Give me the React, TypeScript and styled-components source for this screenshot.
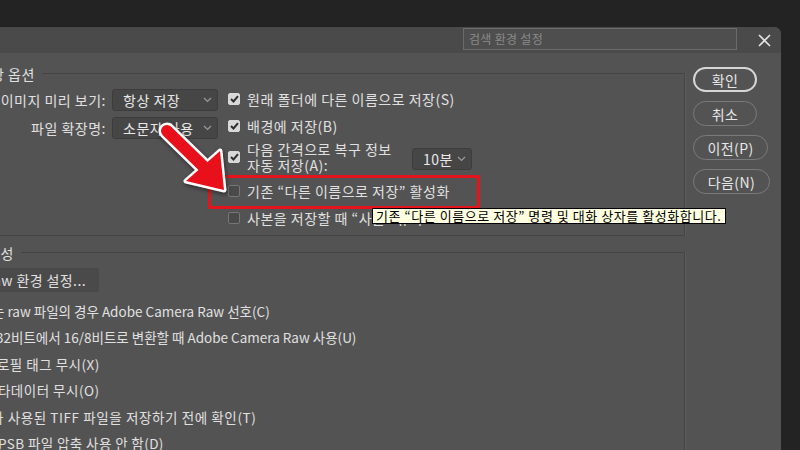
import React from "react";
import styled, { createGlobalStyle } from "styled-components";

const GlobalStyle = createGlobalStyle`
  html, body {
    margin: 0;
    padding: 0;
    background: #232323;
  }
  body {
    font-family: "Noto Sans CJK KR", "Noto Sans", sans-serif;
  }
`;

const Screen = styled.div`
  position: relative;
  width: 800px;
  height: 450px;
  overflow: hidden;
  background: #232323;
  display: flex;
  flex-direction: column;
`;

const TopGap = styled.div`
  height: 27px;
  flex: none;
`;

const Dialog = styled.div`
  margin-left: -12px;
  width: 793px;
  flex: 1;
  background: #535353;
  border-top-right-radius: 7px;
  display: flex;
  flex-direction: column;
  color: #e0e0e0;
  font-size: 14px;
`;

const TitleBar = styled.div`
  height: 26px;
  flex: none;
  background: #4a4a4a;
  border-top-right-radius: 7px;
  display: flex;
  align-items: flex-start;
  justify-content: flex-end;
`;

const SearchBox = styled.div`
  margin-top: 1px;
  width: 274px;
  height: 22px;
  box-sizing: border-box;
  border: 1px solid #6b6b6b;
  background: #4e4e4e;
  padding-left: 5px;
  font-size: 12px;
  letter-spacing: 0.3px;
  line-height: 20px;
  color: #8a8a8a;
`;

const CloseButton = styled.div`
  width: 44px;
  height: 26px;
  box-sizing: border-box;
  padding-left: 21px;
  display: flex;
  align-items: center;
`;

const Body = styled.div`
  flex: 1;
  display: flex;
  padding-top: 13px;
  min-height: 0;
`;

const MainCol = styled.div`
  width: 697px;
  flex: none;
  box-sizing: border-box;
  padding-left: 6px;
  display: flex;
  flex-direction: column;
`;

const ButtonCol = styled.div`
  padding-left: 8px;
  padding-top: 1px;
  display: flex;
  flex-direction: column;
  align-items: flex-start;
  gap: 9px;
`;

const PillButton = styled.div<{ $width: number; $primary?: boolean }>`
  width: ${({ $width }) => $width}px;
  height: 25px;
  box-sizing: border-box;
  border-radius: 13px;
  border: ${({ $primary }) =>
    $primary ? "2px solid #d6d6d6" : "1px solid #7a7a7a"};
  display: flex;
  align-items: center;
  justify-content: center;
  color: #e6e6e6;
  font-size: 14px;
  letter-spacing: 0.4px;
`;

const Group = styled.div<{ $gapTop?: number; $grow?: boolean }>`
  margin-top: ${({ $gapTop }) => $gapTop ?? 0}px;
  display: flex;
  flex-direction: column;
  flex: ${({ $grow }) => ($grow ? 1 : "none")};
`;

const GroupHead = styled.div`
  height: 16px;
  display: flex;
  align-items: center;
`;

const GroupTitle = styled.div<{ $shift: number }>`
  margin-left: ${({ $shift }) => $shift}px;
  padding-right: 7px;
  line-height: 16px;
  letter-spacing: 0.5px;
  white-space: nowrap;
`;

const GroupRule = styled.div`
  flex: 1;
  align-self: flex-end;
  height: 8px;
  border-top: 1px solid #444444;
  border-right: 1px solid #444444;
  box-shadow: 1px 0 0 #5b5b5b;
`;

const GroupBody = styled.div<{ $height?: number }>`
  box-sizing: border-box;
  height: ${({ $height }) => ($height ? `${$height}px` : "auto")};
  flex: ${({ $height }) => ($height ? "none" : 1)};
  border: 1px solid #444444;
  border-top: none;
  box-shadow: 1px 0 0 #5b5b5b;
`;

const SaveOptions = styled(GroupBody)`
  display: flex;
  align-items: flex-start;
  padding-top: 4px;
  letter-spacing: 0.5px;
`;

const FieldGrid = styled.div`
  margin-top: 3px;
  display: grid;
  grid-template-columns: 111px 106px;
  grid-auto-rows: 22px;
  column-gap: 6px;
  row-gap: 6px;
  align-items: center;
`;

const FieldLabel = styled.div`
  text-align: right;
  white-space: nowrap;
  line-height: 22px;
`;

const SelectBox = styled.div<{ $width?: number; $nudge?: number }>`
  width: ${({ $width }) => ($width ? `${$width}px` : "auto")};
  margin-top: ${({ $nudge }) => $nudge ?? 0}px;
  height: 22px;
  box-sizing: border-box;
  background: #464646;
  border: 1px solid #3d3d3d;
  border-radius: 3px;
  display: flex;
  align-items: center;
  justify-content: space-between;
  padding: 0 5px 0 10px;
  color: #e8e8e8;
  white-space: nowrap;
  flex: none;
`;

const CheckCol = styled.div`
  margin-left: 10px;
  display: flex;
  flex-direction: column;
`;

const CheckRow = styled.div<{ $h: number }>`
  height: ${({ $h }) => $h}px;
  display: flex;
  align-items: center;
  gap: 7px;
  white-space: nowrap;
`;

const Box = styled.div<{ $checked?: boolean }>`
  width: 12px;
  height: 12px;
  box-sizing: border-box;
  border-radius: 2px;
  flex: none;
  display: flex;
  align-items: center;
  justify-content: center;
  background: ${({ $checked }) => ($checked ? "#d8d8d8" : "#4a4a4a")};
  border: 1px solid ${({ $checked }) => ($checked ? "#d8d8d8" : "#767676")};
`;

const TwoLine = styled.div`
  width: 158px;
  line-height: 16px;
  white-space: normal;
`;

const RawButton = styled.div`
  margin-top: 7px;
  margin-left: -96px;
  width: 200px;
  height: 24px;
  box-sizing: border-box;
  background: #4a4a4a;
  border: 1px solid #484848;
  border-radius: 3px;
  text-align: right;
  padding-right: 12px;
  line-height: 22px;
  letter-spacing: 0.4px;
  white-space: nowrap;
  overflow: hidden;
`;

const CompatBody = styled(GroupBody)`
  display: flex;
  flex-direction: column;
  border-bottom: none;
`;

const Lines = styled.div`
  margin-top: 6px;
  display: flex;
  flex-direction: column;
  font-size: 13.5px;
`;

const ClippedLine = styled.div<{ $shift: number; $spacing: number }>`
  margin-left: ${({ $shift }) => $shift}px;
  letter-spacing: ${({ $spacing }) => $spacing}px;
  line-height: 26.4px;
  white-space: nowrap;
`;

const RedFrame = styled.div`
  position: absolute;
  left: 208px;
  top: 175px;
  width: 272px;
  height: 34px;
  box-sizing: border-box;
  border: 3px solid #e5141c;
  border-radius: 2px;
`;

const Tooltip = styled.div`
  position: absolute;
  left: 372px;
  top: 208px;
  height: 16px;
  box-sizing: border-box;
  background: #ffffe1;
  border: 1px solid #000;
  padding: 0 3px;
  color: #000;
  font-size: 13px;
  letter-spacing: 0.55px;
  line-height: 14px;
  white-space: nowrap;
`;

const ArrowLayer = styled.svg`
  position: absolute;
  left: 150px;
  top: 115px;
  filter: drop-shadow(1px 2px 2px rgba(0, 0, 0, 0.45));
`;

const Chevron = () => (
  <svg width="9" height="6" viewBox="0 0 9 6">
    <polyline
      points="1,1 4.5,4.5 8,1"
      fill="none"
      stroke="#9a9a9a"
      strokeWidth="1.2"
    />
  </svg>
);

const Check = () => (
  <svg width="9" height="8" viewBox="0 0 9 8">
    <polyline
      points="1,4 3.5,6.5 8,1.2"
      fill="none"
      stroke="#2e2e2e"
      strokeWidth="2"
    />
  </svg>
);

const Select = ({
  value,
  width,
  nudge,
}: {
  value: string;
  width?: number;
  nudge?: number;
}) => (
  <SelectBox $width={width} $nudge={nudge}>
    {value}
    <Chevron />
  </SelectBox>
);

const compatLines = [
  { shift: -3, spacing: 0, text: "는 raw 파일의 경우 Adobe Camera Raw 선호(C)" },
  {
    shift: 1,
    spacing: 0,
    text: "32비트에서 16/8비트로 변환할 때 Adobe Camera Raw 사용(U)",
  },
  { shift: -11, spacing: 0.5, text: "프로필 태그 무시(X)" },
  { shift: -10, spacing: 0.5, text: "메타데이터 무시(O)" },
  { shift: -4, spacing: 0.6, text: "가 사용된 TIFF 파일을 저장하기 전에 확인(T)" },
  { shift: 3, spacing: 0.4, text: "PSB 파일 압축 사용 안 함(D)" },
];

export default function App() {
  return (
    <Screen>
      <GlobalStyle />
      <TopGap />
      <Dialog>
        <TitleBar>
          <SearchBox>검색 환경 설정</SearchBox>
          <CloseButton>
            <svg width="13" height="13" viewBox="0 0 13 13">
              <path
                d="M1 1 L12 12 M12 1 L1 12"
                stroke="#e4e4e4"
                strokeWidth="1.6"
              />
            </svg>
          </CloseButton>
        </TitleBar>
        <Body>
          <MainCol>
            <Group>
              <GroupHead>
                <GroupTitle $shift={-3}>장 옵션</GroupTitle>
                <GroupRule />
              </GroupHead>
              <SaveOptions $height={154}>
                <FieldGrid>
                  <FieldLabel>이미지 미리 보기:</FieldLabel>
                  <Select value="항상 저장" />
                  <FieldLabel>파일 확장명:</FieldLabel>
                  <Select value="소문자 사용" />
                </FieldGrid>
                <CheckCol>
                  <CheckRow $h={26}>
                    <Box $checked>
                      <Check />
                    </Box>
                    원래 폴더에 다른 이름으로 저장(S)
                  </CheckRow>
                  <CheckRow $h={28}>
                    <Box $checked>
                      <Check />
                    </Box>
                    배경에 저장(B)
                  </CheckRow>
                  <CheckRow $h={34}>
                    <Box $checked>
                      <Check />
                    </Box>
                    <TwoLine>
                      다음 간격으로 복구 정보
                      <br />
                      자동 저장(A):
                    </TwoLine>
                    <Select value="10분" width={60} nudge={4} />
                  </CheckRow>
                  <CheckRow $h={34}>
                    <Box />
                    기존 “다른 이름으로 저장” 활성화
                  </CheckRow>
                  <CheckRow $h={20}>
                    <Box />
                    사본을 저장할 때 “사본” 유지
                  </CheckRow>
                </CheckCol>
              </SaveOptions>
            </Group>
            <Group $gapTop={9} $grow>
              <GroupHead>
                <GroupTitle $shift={-7}>환성</GroupTitle>
                <GroupRule />
              </GroupHead>
              <CompatBody>
                <RawButton>Camera Raw 환경 설정...</RawButton>
                <Lines>
                  {compatLines.map((l) => (
                    <ClippedLine
                      key={l.text}
                      $shift={l.shift}
                      $spacing={l.spacing}
                    >
                      {l.text}
                    </ClippedLine>
                  ))}
                </Lines>
              </CompatBody>
            </Group>
          </MainCol>
          <ButtonCol>
            <PillButton $width={64} $primary>
              확인
            </PillButton>
            <PillButton $width={64}>취소</PillButton>
            <PillButton $width={75}>이전(P)</PillButton>
            <PillButton $width={77}>다음(N)</PillButton>
          </ButtonCol>
        </Body>
      </Dialog>

      <RedFrame />
      <Tooltip>기존 “다른 이름으로 저장” 명령 및 대화 상자를 활성화합니다.</Tooltip>
      <ArrowLayer width="90" height="90" viewBox="0 0 90 90">
        <line
          x1="17"
          y1="16"
          x2="55"
          y2="53"
          stroke="#ffffff"
          strokeWidth="17"
          strokeLinecap="round"
        />
        <polygon
          points="74,75 70,36 36,66"
          fill="#ffffff"
          stroke="#ffffff"
          strokeWidth="5"
          strokeLinejoin="round"
        />
        <line
          x1="17"
          y1="16"
          x2="55"
          y2="53"
          stroke="#e8101a"
          strokeWidth="12"
          strokeLinecap="round"
        />
        <polygon points="74,75 70,36 36,66" fill="#e8101a" />
      </ArrowLayer>
    </Screen>
  );
}
